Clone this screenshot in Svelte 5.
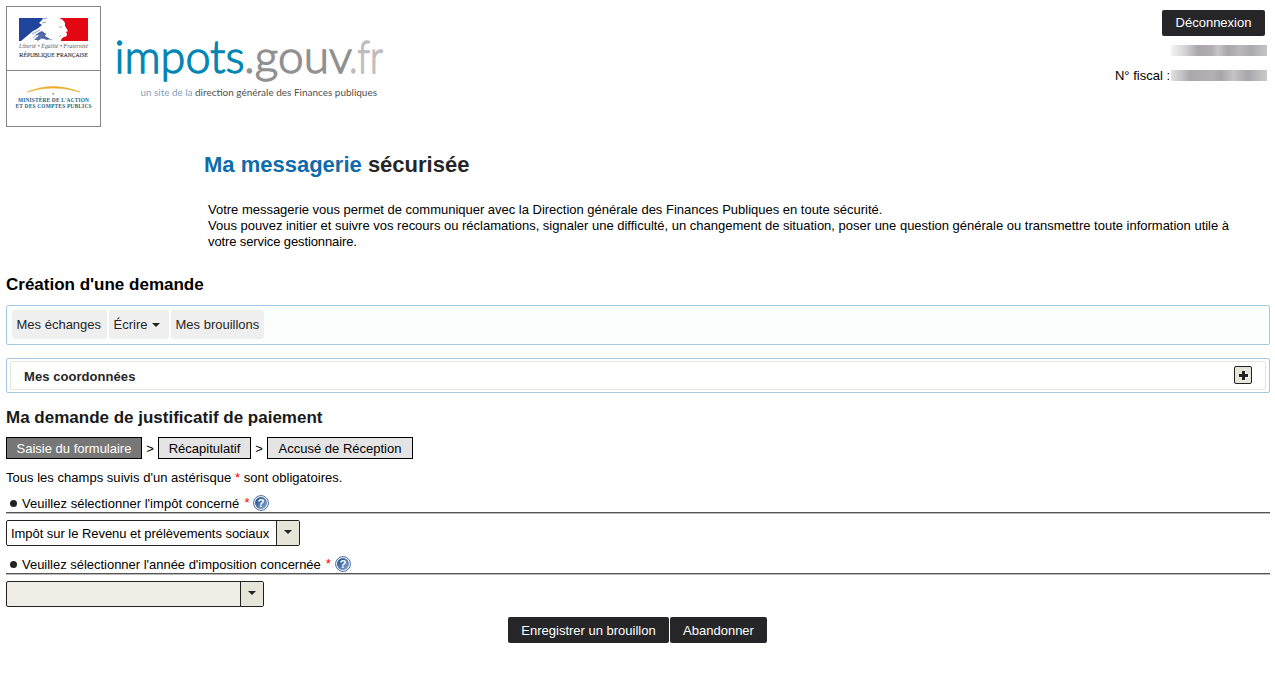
<script>
  const nav = [
    { label: 'Mes échanges', w: 95 },
    { label: 'Écrire', w: 60, menu: true },
    { label: 'Mes brouillons', w: 93 }
  ];
  const steps = [
    { label: 'Saisie du formulaire', w: 136, active: true },
    { label: 'Récapitulatif', w: 93 },
    { label: 'Accusé de Réception', w: 146 }
  ];
  const fields = [
    { label: "Veuillez sélectionner l'impôt concerné", value: 'Impôt sur le Revenu et prélèvements sociaux', w: 294, spacing: 0.026 },
    { label: "Veuillez sélectionner l'année d'imposition concernée", value: '', w: 258, spacing: -0.02 }
  ];
</script>

<div class="page">
  <header>
    <svg class="gov" width="95" height="121" viewBox="0 0 95 121">
      <rect x=".5" y=".5" width="94" height="120" fill="#fff" stroke="#858585" />
      <path d="M0 64.500H95" stroke="#858585" />
      <path d="M13 12H37L35 15L33 17L36 19L31 23L27 25L21 30L15 35H13Z" fill="#1f449c" />
      <path d="M53 12H82V35H55Q55 32 58 31Q61 31 61 28L60 26L62 25L59 20L59 17Q57 13 53 12Z" fill="#e30613" />
      <path d="M35 15Q37 12 41 12M36 17L40 16M27 32L34 26L40 28M31 35L38 31L46 34M26 28L34 24" fill="none" stroke="#8d9bc5" stroke-width="1" />
      <path d="M28 34L33 29L29 29L36 25L40 28L39 30L44 33L41 34L35 32L33 34Z" fill="#35549c" opacity=".85" />
      <path d="M53 21H56M53 31L55 29" stroke="#999" stroke-width=".8" />
      <text x="13" y="42" font-size="5.800" font-style="italic" fill="#555" textLength="69">Liberté • Égalité • Fraternité</text>
      <text x="13" y="51" font-size="7" fill="#333" stroke="#333" stroke-width=".12" textLength="69" lengthAdjust="spacingAndGlyphs">R<tspan font-size="5.800">ÉPUBLIQUE</tspan> F<tspan font-size="5.800">RANÇAISE</tspan></text>
      <path d="M21 86Q47 75 74 86Q47 78 21 86Z" fill="#e9ad29" stroke="#e9ad29" stroke-width=".6" />
      <text x="46" y="88.500" font-size="5" fill="#17817d">à</text>
      <text x="12" y="96" font-size="5.400" font-weight="bold" fill="#23617b" textLength="71">MINISTÈRE DE L'ACTION</text>
      <text x="9.500" y="101.800" font-size="5.400" font-weight="bold" fill="#23617b" textLength="76">ET DES COMPTES PUBLICS</text>
    </svg>
    <svg class="brand" width="290" height="95" viewBox="110 20 290 95">
      <g font-size="45" font-weight="300" stroke-width="1.300">
        <text x="114.500" y="73" fill="#0086b5" stroke="#0086b5" textLength="130" lengthAdjust="spacingAndGlyphs">impots</text>
        <text x="244" y="73" fill="#909090" stroke="#909090" textLength="108" lengthAdjust="spacingAndGlyphs">.gouv</text>
        <text x="349" y="73" fill="#bcbcbc" stroke="#bcbcbc" textLength="34" lengthAdjust="spacingAndGlyphs">.fr</text>
      </g>
      <text x="140.500" y="96" font-size="9.500" fill="#7f9fba" textLength="52" lengthAdjust="spacingAndGlyphs">un site de la</text>
      <text x="195" y="96" font-size="9.500" fill="#505050" textLength="182" lengthAdjust="spacingAndGlyphs">direction générale des Finances publiques</text>
    </svg>
    <div class="account">
      <button class="dark logout">Déconnexion</button>
      <div class="line"><i class="mask"></i></div>
      <div class="line fiscal"><span>N° fiscal :</span><i class="mask second"></i></div>
    </div>
  </header>

  <h1><span>Ma messagerie</span> sécurisée</h1>
  <p class="intro">
    <span class="i1">Votre messagerie vous permet de communiquer avec la Direction générale des Finances Publiques en toute sécurité.</span><br />
    <span class="i2">Vous pouvez initier et suivre vos recours ou réclamations, signaler une difficulté, un changement de situation, poser une question générale ou transmettre toute information utile à</span><br />
    <span class="i3">votre service gestionnaire.</span>
  </p>

  <h2>Création d'une demande</h2>
  <nav>
    {#each nav as item}
      <a style:width="{item.w}px">{item.label}{#if item.menu}<i class="caret"></i>{/if}</a>
    {/each}
  </nav>
  <section class="panel">
    <div class="panel-head">
      <b>Mes coordonnées</b>
      <button class="plus" aria-label="Mes coordonnées"><svg width="10" height="10"><path d="M5.500 1V10M1 5.500H10" stroke="#fff" stroke-width="3" /><path d="M4.500 0V9M0 4.500H9" stroke="#222" stroke-width="3" /></svg></button>
    </div>
  </section>

  <h2 class="form-title">Ma demande de justificatif de paiement</h2>
  <div class="steps">
    {#each steps as step, i}
      {#if i}<span class="sep">&gt;</span>{/if}
      <span class="step" class:active={step.active} style:width="{step.w}px">{step.label}</span>
    {/each}
  </div>
  <p class="required">Tous les champs suivis d'un astérisque <em>*</em> sont obligatoires.</p>

  {#each fields as field}
    <div class="label">
      <i class="dot"></i><span style:letter-spacing="{field.spacing}px">{field.label}</span><em>*</em>
      <svg width="16" height="16" viewBox="0 0 16 16">
        <defs><linearGradient id="help" x2="1" y2="1"><stop stop-color="#1d4480" /><stop offset="1" stop-color="#8aabd6" /></linearGradient></defs>
        <circle cx="8" cy="8" r="7.400" fill="#fff" stroke="#45699e" />
        <circle cx="8" cy="8" r="6" fill="url(#help)" />
        <text x="8" y="12.200" text-anchor="middle" font-size="11.500" font-weight="bold" fill="#fff">?</text>
      </svg>
    </div>
    <div class="select" class:disabled={!field.value} style:width="{field.w}px">
      <span>{field.value}</span><div class="trigger"><i class="caret"></i></div>
    </div>
  {/each}
  <div class="actions">
    <button class="dark save">Enregistrer un brouillon</button>
    <button class="dark cancel">Abandonner</button>
  </div>
</div>

<style>
  :global(body) { margin: 0; background: #fff; }
  .page { box-sizing: border-box; height: 679px; padding: 6px 5px 0 6px; overflow: hidden; font: 13px/16px "Liberation Sans", Arial, sans-serif; color: #000; }
  * { box-sizing: border-box; }
  header { display: flex; height: 121px; }
  svg { display: block; flex: none; }
  .gov { font-family: "Liberation Serif", serif; }
  .brand { margin: 14px 0 0 9px; font-family: Lato, sans-serif; overflow: visible; }
  .account { margin-left: auto; padding: 4px 3px 0 0; display: flex; flex-direction: column; align-items: flex-end; }
  button { font: inherit; padding: 0; margin: 0; border: 0; }
  .dark { height: 26px; color: #fff; background: #262628; border-radius: 2px; }
  .logout { width: 103px; margin-right: 2px; margin-bottom: 9px; }
  .line { display: flex; height: 11px; }
  .mask { width: 96px; height: 11px; background: linear-gradient(90deg, #f4f4f4, #d5d4d6 14%, #a9a7ab 28%, #b0aeb0 42%, #c8c6c8 49%, #aaa6ab 59%, #bab8bb 72%, #aaa9ac 83%, #c6c6c9); }
  .second { background: linear-gradient(90deg, #e2e2e2, #aaa8ac 20%, #b3b1b5 42%, #a8a6a9 52%, #c5c3c5 65%, #a8a6a9 80%, #cacaca); }
  .fiscal { margin-top: 14px; }
  .fiscal span { margin: -2px 1px 0 0; }
  h1 { font-size: 22px; line-height: 26px; margin: 25px 0 0 198px; color: #262628; }
  h1 span { color: #0e6bac; }
  .intro { margin: 24px 0 0 202px; white-space: nowrap; }
  .i1 { letter-spacing: -0.012px; }
  .i2 { letter-spacing: -0.007px; }
  .i3 { letter-spacing: -0.11px; }
  h2 { font-size: 17px; line-height: 20px; margin: 25px 0 10px; }
  nav { display: flex; gap: 2px; height: 40px; padding: 4px 5px; border: 1px solid #a6c9e2; border-radius: 2px; background: #fcfdfd; }
  nav a { display: flex; align-items: center; height: 29px; padding-left: 4.500px; white-space: nowrap; border-radius: 3px; background: #efefef; color: #262628; }
  .caret { width: 0; height: 0; border: 4px solid transparent; border-top-color: #222; border-bottom: 0; }
  nav .caret { margin: 1px 0 0 5px; }
  .panel { height: 35px; margin-top: 13px; padding: 2px 3px; border: 1px solid #a6c9e2; border-radius: 2px; }
  .panel-head { display: flex; align-items: center; justify-content: space-between; height: 29px; padding: 0 13px; border: 1px solid #e5e5d8; border-radius: 2px; color: #262628; }
  .panel-head b { padding-top: 2px; letter-spacing: .06px; }
  .plus { display: grid; place-items: center; width: 18px; height: 18px; margin-bottom: 1px; background: #e5e5d8; border: 1px solid #222; border-radius: 2px; }
  .plus svg { margin: 1px 0 0 1px; }
  .form-title { margin: 15px 0 9px; color: #1a1a1a; }
  .steps { display: flex; height: 22px; line-height: 22px; }
  .step { border: 1px solid #000; background: #e4e4e4; text-align: center; }
  .active { background: #777; color: #fff; }
  .sep { width: 16px; text-align: center; padding-top: 1px; }
  .required { margin: 11px 0 0; letter-spacing: .026px; }
  em { color: red; font-style: normal; }
  .label { display: flex; align-items: center; height: 20px; margin-top: 8px; padding-left: 4px; border-bottom: 1px solid #555; box-shadow: 0 1px #bbb; }
  .required + .label { margin-top: 7px; }
  .label > span { padding-top: 2px; }
  .dot { width: 7px; height: 7px; border-radius: 50%; background: #222; margin: 1px 5px 0 0; }
  .label em { margin: 1px 4px 0 5px; }
  .select { display: flex; height: 26px; margin-top: 7px; border: 1px solid #222; border-radius: 2px; line-height: 26px; overflow: hidden; }
  .select > span { flex: 1; padding-left: 4px; white-space: nowrap; letter-spacing: -.045px; }
  .disabled { background: #eeeee6; }
  .trigger { width: 23px; border-left: 1px solid #222; background: #e5e5d8; display: flex; justify-content: center; padding-top: 9px; }
  .actions { display: flex; justify-content: center; gap: 1px; margin-top: 10px; padding-right: 2px; }
  .actions .dark { padding: 2px 0 0 1px; }
  .save { width: 161px; }
  .cancel { width: 97px; }
</style>
